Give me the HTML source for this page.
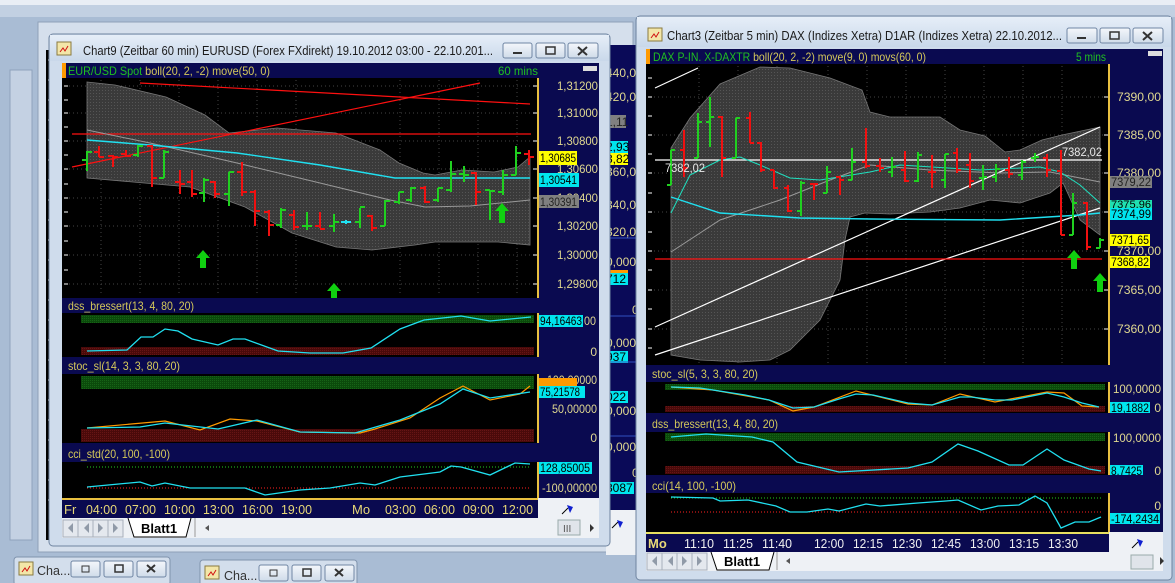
<!DOCTYPE html>
<html><head><meta charset="utf-8"><style>
html,body{margin:0;padding:0;background:#a9bcd4;overflow:hidden}
svg{display:block}
text{font-family:"Liberation Sans",sans-serif}
</style></head><body>
<svg width="1175" height="583" viewBox="0 0 1175 583" xmlns="http://www.w3.org/2000/svg">
<defs>
<linearGradient id="tb" x1="0" y1="0" x2="0" y2="1"><stop offset="0" stop-color="#e6eef8"/><stop offset="1" stop-color="#c9d8ea"/></linearGradient>
<linearGradient id="bt" x1="0" y1="0" x2="0" y2="1"><stop offset="0" stop-color="#f4f7fb"/><stop offset="1" stop-color="#cfdbe9"/></linearGradient>
<pattern id="dots" width="3" height="3" patternUnits="userSpaceOnUse"><rect width="3" height="3" fill="#3a3a3a"/><rect width="1" height="1" fill="#555"/></pattern>
<pattern id="gdots" width="2" height="2" patternUnits="userSpaceOnUse"><rect width="2" height="2" fill="#0b4a0b"/><rect width="1" height="1" fill="#166316"/></pattern>
<pattern id="rdots" width="2" height="2" patternUnits="userSpaceOnUse"><rect width="2" height="2" fill="#4a0a0a"/><rect width="1" height="1" fill="#661515"/></pattern>
</defs>
<rect x="0" y="0" width="1175" height="583" fill="#a9bcd4"/>
<rect x="0" y="0" width="1175" height="5" fill="#e9eef5"/>
<rect x="0" y="5" width="1175" height="12" fill="#c2d0e2"/>
<rect x="10" y="70" width="22" height="470" fill="#c4d1e3" stroke="#8fa2bc"/>
<rect x="38" y="22" width="595" height="530" fill="#d5dfec" stroke="#8ea0b8"/>
<rect x="46" y="50" width="8" height="490" fill="#000"/>
<path d="M48 60h4M48 80h4M48 100h4M48 120h4M48 140h4M48 160h4M48 180h4M48 200h4M48 220h4M48 240h4M48 260h4M48 280h4M48 300h4M48 320h4M48 340h4M48 360h4M48 380h4M48 400h4M48 420h4M48 440h4M48 460h4M48 480h4M48 500h4" stroke="#fff"/>
<rect x="606" y="45" width="32" height="465" fill="#0a0a58"/>
<g font-size="12" fill="#e0d890">
<text x="606" y="77">440,00</text><text x="606" y="101">420,00</text>
<rect x="606" y="115" width="20" height="13" fill="#808080"/><text x="606" y="126" fill="#222">1,11</text>
<rect x="606" y="141" width="22" height="12" fill="#00e5ee"/><text x="606" y="151" fill="#000">2,93</text>
<rect x="606" y="153" width="22" height="12" fill="#ffff00"/><text x="606" y="163" fill="#000">3,82</text>
<text x="606" y="176">360,00</text><text x="606" y="209">340,00</text><text x="606" y="236">320,00</text>
<text x="606" y="266">0,0000</text>
<rect x="606" y="270" width="22" height="4" fill="#ff9a00"/>
<rect x="606" y="273" width="22" height="12" fill="#00e5ee"/><text x="606" y="283" fill="#000">712</text>
<text x="632" y="314">0</text><text x="606" y="347">0,0000</text>
<rect x="606" y="351" width="22" height="12" fill="#00e5ee"/><text x="606" y="361" fill="#000">937</text>
<rect x="606" y="391" width="22" height="12" fill="#00e5ee"/><text x="606" y="401" fill="#000">022</text>
<text x="606" y="415">0,0000</text><text x="606" y="451">0,0000</text><text x="632" y="477">0</text>
<rect x="606" y="482" width="28" height="12" fill="#00e5ee"/><text x="606" y="492" fill="#000">3087</text>
</g>
<path d="M606 238H636M606 316H636M606 362H636M606 436H636" stroke="#3050c0"/>
<rect x="606" y="510" width="32" height="45" fill="#eef1f5"/>
<path d="M612 528l6-6" stroke="#000"/><path d="M617 520l6 2-3 6z" fill="#1020d0"/>

<!-- CHART9 -->
<rect x="49" y="34" width="561" height="512" rx="4" fill="#cfdcec" stroke="#6f84a0"/>
<rect x="50" y="35" width="559" height="26" fill="url(#tb)"/>
<rect x="57" y="42" width="14" height="13" fill="#f3e6a8" stroke="#8a7a40"/><path d="M60 52l3-4 2 3 3-5" stroke="#d01010" fill="none"/>
<text x="83" y="55" font-size="12.5" fill="#1a1a1a" textLength="410" lengthAdjust="spacingAndGlyphs">Chart9 (Zeitbar 60 min)  EURUSD (Forex FXdirekt) 19.10.2012 03:00 - 22.10.201...</text>
<g stroke="#7086a4" fill="url(#bt)"><rect x="503" y="43" width="29" height="15" rx="2"/><rect x="536" y="43" width="29" height="15" rx="2"/><rect x="568" y="43" width="30" height="15" rx="2"/></g>
<path d="M513 53h9" stroke="#333" stroke-width="2"/><rect x="546" y="47" width="9" height="7" fill="none" stroke="#333" stroke-width="1.5"/><path d="M578 47l9 8M587 47l-9 8" stroke="#333" stroke-width="2"/>
<rect x="62" y="63" width="537" height="15" fill="#0a0a50"/>
<rect x="62" y="63" width="4" height="15" fill="#ff9a00"/>
<rect x="583" y="66" width="14" height="5" fill="#ddd"/>
<text x="68" y="75" font-size="12" textLength="202" lengthAdjust="spacingAndGlyphs"><tspan fill="#20c020">EUR/USD Spot</tspan><tspan fill="#d4c85a"> boll(20, 2, -2) move(50, 0)</tspan></text>
<text x="498" y="75" font-size="12" fill="#20c020" textLength="40" lengthAdjust="spacingAndGlyphs">60 mins</text>
<rect x="62" y="78" width="476" height="220" fill="#000"/>
<rect x="538" y="78" width="61" height="220" fill="#0a0a50"/>
<path d="M538 78V298" stroke="#e8c040" stroke-width="2"/>
<g stroke="#444" stroke-dasharray="1,3">
<path d="M101 80V296M140 80V296M179 80V296M218 80V296M257 80V296M296 80V296M400 80V296M439 80V296M478 80V296M517 80V296"/>
<path d="M65 86H536M65 113H536M65 141H536M65 169H536M65 198H536M65 226H536M65 255H536M65 284H536"/>
</g>
<path d="M64 86h4M64 100h4M64 113h4M64 127h4M64 141h4M64 155h4M64 169h4M64 184h4M64 198h4M64 212h4M64 226h4M64 241h4M64 255h4M64 270h4M64 284h4M533 86h4M533 113h4M533 141h4M533 169h4M533 198h4M533 226h4M533 255h4M533 284h4" stroke="#fff"/>
<polygon points="87,82 115,85 166,97 205,115 229,133 277,128 336,133 380,150 399,163 423,173 435,175 462,170 494,172 518,167 530,157 530,245 498,242 435,242 415,245 372,250 336,247 292,233 245,207 190,187 87,178" fill="url(#dots)" stroke="#777" stroke-width="0.8"/>
<path d="M72 134H531" stroke="#ff1010" stroke-width="1.2"/>
<path d="M140 83L530 104M72 167L480 83" stroke="#ff1010" stroke-width="1.2"/>
<polyline points="87,130 150,143 237,163 320,183 390,200 425,207 470,206 530,200" fill="none" stroke="#999"/>
<polyline points="87,140 150,145 237,153 320,165 395,178 470,178 530,178" fill="none" stroke="#20e0f0" stroke-width="1.4"/>
<path stroke="#20d020" stroke-width="2" fill="none" d="M87 151V171M82 160H87M87 152H92M138 145V157M133 155H138M138 146H143M164 150V178M159 178H164M164 152H169M204 178V202M199 193H204M204 180H209M229 172V206M224 194H229M229 172H234M281 208V228M276 225H281M281 210H286M307 212V230M302 226H307M307 226H312M334 214V232M329 226H334M334 222H339M360 208V228M355 222H360M360 207H365M385 200V226M380 226H385M385 201H390M399 192V204M394 202H399M399 192H404M411 187V202M406 200H411M411 188H416M438 188V202M433 200H438M438 188H443M451 161V192M446 190H451M451 174H456M464 166V182M459 174H464M464 175H469M490 190V220M485 190H490M490 191H495M503 170V195M498 192H503M503 175H508M516 146V175M511 175H516M516 153H521"/>
<path stroke="#f01010" stroke-width="2" fill="none" d="M99 146V157M94 152H99M99 157H104M113 155V167M108 156H113M113 157H118M126 150V157M121 154H126M126 156H131M152 145V187M147 146H152M152 178H157M180 170V194M175 182H180M180 184H185M192 170V197M187 182H192M192 194H197M215 181V198M210 182H215M215 194H220M242 162V196M237 172H242M242 192H247M255 190V226M250 192H255M255 211H260M269 210V236M264 212H269M269 225H274M294 210V230M289 215H294M294 227H299M320 212V228M315 226H320M320 229H325M372 215V231M367 216H372M372 228H377M425 186V203M420 188H425M425 202H430M476 172V205M471 173H476M476 192H481M529 150V165M524 154H529M529 157H534"/>
<path d="M341 222H351M346 220V224" stroke="#20e0f0" stroke-width="2"/>
<g fill="#10d010"><path d="M203 250l-7 8h4v10h6v-10h4z"/><path d="M334 283l-7 8h4v8h6v-8h4z"/><path d="M502 203l-7 8h4v12h6v-12h4z"/></g>
<g font-size="12" fill="#e0d890" text-anchor="end">
<text x="598" y="90" textLength="41" lengthAdjust="spacingAndGlyphs">1,31200</text><text x="598" y="117" textLength="41" lengthAdjust="spacingAndGlyphs">1,31000</text><text x="598" y="145" textLength="41" lengthAdjust="spacingAndGlyphs">1,30800</text>
<text x="598" y="173" textLength="41" lengthAdjust="spacingAndGlyphs">1,30600</text><text x="598" y="202" textLength="41" lengthAdjust="spacingAndGlyphs">1,30400</text><text x="598" y="230" textLength="41" lengthAdjust="spacingAndGlyphs">1,30200</text>
<text x="598" y="259" textLength="41" lengthAdjust="spacingAndGlyphs">1,30000</text><text x="598" y="288" textLength="41" lengthAdjust="spacingAndGlyphs">1,29800</text>
</g>
<rect x="539" y="151" width="38" height="14" fill="#ffff00"/><text x="540" y="162" font-size="12" fill="#000" textLength="36" lengthAdjust="spacingAndGlyphs">1,30685</text>
<rect x="539" y="173" width="40" height="14" fill="#00e5ee"/><text x="540" y="184" font-size="12" fill="#000" textLength="37" lengthAdjust="spacingAndGlyphs">1,30541</text>
<rect x="539" y="195" width="40" height="13" fill="#808080"/><text x="540" y="206" font-size="12" fill="#222" textLength="37" lengthAdjust="spacingAndGlyphs">1,30391</text>
<!-- dss -->
<rect x="62" y="298" width="537" height="15" fill="#0a0a50"/>
<text x="68" y="310" font-size="12" fill="#d4c85a" textLength="126" lengthAdjust="spacingAndGlyphs">dss_bressert(13, 4, 80, 20)</text>
<rect x="62" y="313" width="476" height="44" fill="#000"/>
<rect x="538" y="313" width="61" height="44" fill="#0a0a50"/><path d="M538 313V357" stroke="#e8c040" stroke-width="2"/>
<rect x="81" y="315" width="453" height="8" fill="url(#gdots)"/><rect x="81" y="347" width="453" height="8" fill="url(#rdots)"/>
<polyline points="87,351 127,350 141,337 153,337 165,329 178,331 192,339 218,345 233,339 245,339 278,351 310,353 343,353 371,348 400,329 424,320 461,316 490,321 531,317" fill="none" stroke="#20e0f0" stroke-width="1.3"/>
<rect x="539" y="315" width="44" height="12" fill="#00e5ee"/><text x="540" y="325" font-size="12" fill="#000" textLength="42" lengthAdjust="spacingAndGlyphs">94,16463</text><text x="584" y="325" font-size="12" fill="#e0d890" textLength="12" lengthAdjust="spacingAndGlyphs">00</text>
<text x="597" y="356" font-size="12" fill="#e0d890" text-anchor="end">0</text>
<!-- stoc -->
<rect x="62" y="357" width="537" height="17" fill="#0a0a50"/>
<text x="68" y="370" font-size="12" fill="#d4c85a" textLength="112" lengthAdjust="spacingAndGlyphs">stoc_sl(14, 3, 3, 80, 20)</text>
<rect x="62" y="374" width="476" height="69" fill="#000"/>
<rect x="538" y="374" width="61" height="69" fill="#0a0a50"/><path d="M538 374V443" stroke="#e8c040" stroke-width="2"/>
<rect x="81" y="376" width="453" height="13" fill="url(#gdots)"/><rect x="81" y="429" width="453" height="13" fill="url(#rdots)"/>
<polyline points="87,428 165,421 200,430 230,419 257,421 300,432 360,433 375,429 410,418 440,398 463,386 490,400 520,394 530,386" fill="none" stroke="#ff9a00" stroke-width="1.2"/>
<polyline points="87,428 140,427 165,423 218,429 257,420 300,432 355,433 400,420 440,404 463,389 490,398 530,392" fill="none" stroke="#20e0f0" stroke-width="1.3"/>
<text x="597" y="384" font-size="12" fill="#e0d890" text-anchor="end" textLength="50" lengthAdjust="spacingAndGlyphs">100,00000</text>
<rect x="539" y="378" width="38" height="8" fill="#ff9a00"/>
<rect x="539" y="386" width="46" height="12" fill="#00e5ee"/><text x="540" y="396" font-size="12" fill="#000" textLength="40" lengthAdjust="spacingAndGlyphs">75,21578</text>
<text x="597" y="413" font-size="12" fill="#e0d890" text-anchor="end" textLength="45" lengthAdjust="spacingAndGlyphs">50,00000</text>
<text x="597" y="442" font-size="12" fill="#e0d890" text-anchor="end">0</text>
<!-- cci -->
<rect x="62" y="443" width="537" height="19" fill="#0a0a50"/>
<text x="68" y="458" font-size="12" fill="#d4c85a" textLength="102" lengthAdjust="spacingAndGlyphs">cci_std(20, 100, -100)</text>
<rect x="62" y="462" width="476" height="36" fill="#000"/>
<rect x="538" y="462" width="61" height="36" fill="#0a0a50"/><path d="M538 462V498" stroke="#e8c040" stroke-width="2"/>
<path d="M87 467H531" stroke="#20d020" stroke-dasharray="1,2"/><path d="M87 488H531" stroke="#ff2020" stroke-dasharray="1,2"/>
<polyline points="87,487 140,482 152,486 165,483 190,488 245,488 265,495 300,490 330,488 360,483 375,485 400,477 440,472 451,466 461,467 490,475 515,463 530,464" fill="none" stroke="#20e0f0" stroke-width="1.3"/>
<rect x="539" y="462" width="53" height="12" fill="#00e5ee"/><text x="540" y="472" font-size="12" fill="#000" textLength="50" lengthAdjust="spacingAndGlyphs">128,85005</text>
<text x="597" y="492" font-size="12" fill="#e0d890" text-anchor="end" textLength="55" lengthAdjust="spacingAndGlyphs">-100,00000</text>
<!-- time axis -->
<rect x="62" y="498" width="476" height="20" fill="#0a0a50"/><path d="M62 499H538" stroke="#e8c040" stroke-width="2"/>
<rect x="538" y="498" width="61" height="20" fill="#eef1f5"/>
<path d="M562 514l6-6" stroke="#000"/><path d="M567 505l6 2-3 6z" fill="#1020d0"/>
<g font-size="13" fill="#e8d878"><text x="64" y="514">Fr</text><text x="86" y="514" textLength="31" lengthAdjust="spacingAndGlyphs">04:00</text><text x="125" y="514" textLength="31" lengthAdjust="spacingAndGlyphs">07:00</text><text x="164" y="514" textLength="31" lengthAdjust="spacingAndGlyphs">10:00</text><text x="203" y="514" textLength="31" lengthAdjust="spacingAndGlyphs">13:00</text><text x="242" y="514" textLength="31" lengthAdjust="spacingAndGlyphs">16:00</text><text x="281" y="514" textLength="31" lengthAdjust="spacingAndGlyphs">19:00</text><text x="352" y="514">Mo</text><text x="385" y="514" textLength="31" lengthAdjust="spacingAndGlyphs">03:00</text><text x="424" y="514" textLength="31" lengthAdjust="spacingAndGlyphs">06:00</text><text x="463" y="514" textLength="31" lengthAdjust="spacingAndGlyphs">09:00</text><text x="502" y="514" textLength="31" lengthAdjust="spacingAndGlyphs">12:00</text></g>
<rect x="62" y="518" width="537" height="20" fill="#eef1f5"/>
<g fill="#e4e8ee" stroke="#a8b0bc"><rect x="63" y="520" width="15" height="17"/><rect x="78" y="520" width="15" height="17"/><rect x="93" y="520" width="15" height="17"/><rect x="108" y="520" width="15" height="17"/></g>
<g fill="#909aa8"><path d="M68 528l5-5v10z"/><path d="M84 528l5-5v10z"/><path d="M103 528l-5-5v10z"/><path d="M118 528l-5-5v10z"/></g>
<path d="M128 518L134 537H186L191 518" fill="#fff" stroke="#000"/>
<text x="141" y="533" font-size="13" font-weight="bold" fill="#000">Blatt1</text>
<path d="M195 518V537" stroke="#999"/>
<path d="M205 528l4-3v6z" fill="#555"/>
<rect x="558" y="520" width="22" height="15" fill="#e0e4ea" stroke="#9aa"/><text x="563" y="532" font-size="10" fill="#555">III</text>
<path d="M590 524v8l4-4z" fill="#333"/>

<!-- CHART3 -->
<rect x="636" y="16" width="536" height="564" rx="4" fill="#cfdcec" stroke="#6f84a0"/>
<rect x="637" y="17" width="534" height="30" fill="url(#tb)"/>
<rect x="648" y="28" width="14" height="13" fill="#f3e6a8" stroke="#8a7a40"/><path d="M651 38l3-4 2 3 3-5" stroke="#d01010" fill="none"/>
<text x="667" y="40" font-size="12.5" fill="#1a1a1a" textLength="395" lengthAdjust="spacingAndGlyphs">Chart3 (Zeitbar 5 min)  DAX (Indizes Xetra) D1AR (Indizes Xetra) 22.10.2012...</text>
<g stroke="#7086a4" fill="url(#bt)"><rect x="1067" y="28" width="30" height="15" rx="2"/><rect x="1100" y="28" width="30" height="15" rx="2"/><rect x="1133" y="28" width="30" height="15" rx="2"/></g>
<path d="M1077 38h9" stroke="#333" stroke-width="2"/><rect x="1110" y="32" width="9" height="7" fill="none" stroke="#333" stroke-width="1.5"/><path d="M1143 32l9 8M1152 32l-9 8" stroke="#333" stroke-width="2"/>
<rect x="646" y="49" width="517" height="15" fill="#0a0a50"/>
<rect x="646" y="49" width="4" height="15" fill="#ff9a00"/>
<rect x="1148" y="51" width="14" height="5" fill="#ddd"/>
<text x="653" y="61" font-size="12" textLength="273" lengthAdjust="spacingAndGlyphs"><tspan fill="#20c020">DAX P-IN. X-DAXTR</tspan><tspan fill="#d4c85a"> boll(20, 2, -2) move(9, 0) movs(60, 0)</tspan></text>
<text x="1076" y="61" font-size="12" fill="#20c020" textLength="30" lengthAdjust="spacingAndGlyphs">5 mins</text>
<rect x="646" y="64" width="463" height="301" fill="#000"/>
<rect x="1109" y="64" width="54" height="301" fill="#0a0a50"/><path d="M1109 64V365" stroke="#e8c040" stroke-width="2"/>
<g stroke="#444" stroke-dasharray="1,3">
<path d="M699 66V363M738 66V363M777 66V363M828 66V363M867 66V363M906 66V363M945 66V363M984 66V363M1023 66V363M1062 66V363"/>
<path d="M650 97H1107M650 135H1107M650 173H1107M650 212H1107M650 251H1107M650 290H1107M650 329H1107"/>
</g>
<path d="M648 78h4M648 97h4M648 116h4M648 135h4M648 154h4M648 173h4M648 193h4M648 212h4M648 232h4M648 251h4M648 270h4M648 290h4M648 309h4M648 329h4M648 348h4M1104 97h4M1104 135h4M1104 173h4M1104 212h4M1104 251h4M1104 290h4M1104 329h4" stroke="#fff"/>
<polygon points="671,148 690,118 720,84 760,67 790,68 830,78 862,90 870,112 890,117 940,117 960,130 985,136 1005,152 1020,150 1042,140 1062,135 1100,127 1100,235 1080,220 1063,183 1050,193 1020,203 990,200 960,208 930,212 890,214 865,213 850,217 845,240 840,280 820,320 790,350 770,360 740,362 700,360 671,355" fill="url(#dots)" stroke="#777" stroke-width="0.8"/>
<path d="M655 88L698 68M655 327L1100 127M655 355L1100 208M655 160H1102" stroke="#fff" stroke-width="1.2"/>
<path d="M655 259H1102" stroke="#ff1010" stroke-width="1.2"/>
<polyline points="671,252 720,220 780,200 830,180 870,165 930,170 1000,173 1050,172 1100,182" fill="none" stroke="#999"/>
<polyline points="671,213 690,175 720,160 740,157 760,165 790,178 820,180 870,172 900,165 980,170 1040,167 1060,172 1080,185 1100,203" fill="none" stroke="#20e0c0" stroke-width="1"/>
<polyline points="671,197 720,213 800,218 870,219 1000,220 1080,215 1100,213" fill="none" stroke="#20e0f0" stroke-width="1.4"/>
<path stroke="#20d020" stroke-width="2" fill="none" d="M671 150V185M667 185H671M671 150H675M698 113V158M694 158H698M698 122H702M710 97V147M706 122H710M710 117H714M736 118V158M732 158H736M736 118H740M801 181V216M797 211H801M801 183H805M827 166V193M823 193H827M827 172H831M852 148V180M848 180H852M852 162H856M892 157V177M888 172H892M892 167H896M918 152V182M914 181H918M918 155H922M945 154V188M941 180H945M945 154H949M983 165V190M979 178H983M983 177H987M996 164V182M992 177H996M996 169H1000M1022 160V180M1018 175H1022M1022 162H1026M1035 153V162M1031 158H1035M1035 157H1039M1073 193V235M1069 235H1073M1073 203H1077M1100 238V248M1096 248H1100M1100 240H1104"/>
<path stroke="#f01010" stroke-width="2" fill="none" d="M684 130V177M680 150H684M684 168H688M722 116V177M718 117H722M722 158H726M750 112V143M746 118H750M750 143H754M761 142V172M757 143H761M761 170H765M774 170V189M770 170H774M774 188H778M788 185V212M784 188H788M788 211H792M814 183V200M810 184H814M814 184H818M840 176V195M836 177H840M840 180H844M866 128V168M862 162H866M866 166H870M880 158V172M876 166H880M880 168H884M905 151V182M901 170H905M905 181H909M932 155V188M928 172H932M932 172H936M957 148V173M953 153H957M957 170H961M970 153V188M966 165H970M970 181H974M1009 157V178M1005 170H1009M1009 174H1013M1047 154V177M1043 158H1047M1047 170H1051M1061 150V235M1057 171H1061M1061 235H1065M1087 202V250M1083 203H1087M1087 247H1091"/>
<g fill="#10d010"><path d="M1074 250l-7 8h4v11h6v-11h4z"/><path d="M1100 273l-7 8h4v11h6v-11h4z"/></g>
<text x="665" y="172" font-size="12" fill="#e8e8e8" textLength="40" lengthAdjust="spacingAndGlyphs">7382,02</text>
<text x="1062" y="156" font-size="12" fill="#e8e8e8" textLength="40" lengthAdjust="spacingAndGlyphs">7382,02</text>
<g font-size="12" fill="#e0d890" text-anchor="end">
<text x="1161" y="101" textLength="44" lengthAdjust="spacingAndGlyphs">7390,00</text><text x="1161" y="139" textLength="44" lengthAdjust="spacingAndGlyphs">7385,00</text><text x="1161" y="177" textLength="44" lengthAdjust="spacingAndGlyphs">7380,00</text>
<text x="1161" y="255" textLength="44" lengthAdjust="spacingAndGlyphs">7370,00</text><text x="1161" y="294" textLength="44" lengthAdjust="spacingAndGlyphs">7365,00</text><text x="1161" y="333" textLength="44" lengthAdjust="spacingAndGlyphs">7360,00</text>
</g>
<rect x="1110" y="176" width="42" height="12" fill="#808080"/><text x="1111" y="186" font-size="12" fill="#222" textLength="40" lengthAdjust="spacingAndGlyphs">7379,22</text>
<rect x="1110" y="200" width="42" height="9" fill="#20e0b0"/><text x="1111" y="208" font-size="11" fill="#000" textLength="40" lengthAdjust="spacingAndGlyphs">7375,96</text>
<rect x="1110" y="208" width="42" height="12" fill="#00e5ee"/><text x="1111" y="218" font-size="12" fill="#000" textLength="40" lengthAdjust="spacingAndGlyphs">7374,99</text>
<rect x="1110" y="234" width="40" height="12" fill="#ffff00"/><text x="1111" y="244" font-size="12" fill="#000" textLength="38" lengthAdjust="spacingAndGlyphs">7371,65</text>
<rect x="1110" y="256" width="40" height="12" fill="#ffff00"/><text x="1111" y="266" font-size="12" fill="#000" textLength="38" lengthAdjust="spacingAndGlyphs">7368,82</text>
<!-- stoc -->
<rect x="646" y="365" width="517" height="17" fill="#0a0a50"/>
<text x="652" y="378" font-size="12" fill="#d4c85a" textLength="106" lengthAdjust="spacingAndGlyphs">stoc_sl(5, 3, 3, 80, 20)</text>
<rect x="646" y="382" width="463" height="31" fill="#000"/>
<rect x="1109" y="382" width="54" height="31" fill="#0a0a50"/><path d="M1109 382V413" stroke="#e8c040" stroke-width="2"/>
<rect x="665" y="384" width="440" height="6" fill="url(#gdots)"/><rect x="665" y="406" width="440" height="6" fill="url(#rdots)"/>
<polyline points="671,387 713,390 769,400 793,411 814,407 856,391 908,404 932,405 960,394 995,402 1047,392 1064,393 1082,406 1099,407" fill="none" stroke="#ff9a00" stroke-width="1.2"/>
<polyline points="671,387 700,388 713,390 745,395 769,400 793,408 814,407 839,399 856,394 873,395 908,403 932,405 960,397 971,397 995,400 1012,400 1047,393 1064,397 1082,403 1099,407" fill="none" stroke="#20e0f0" stroke-width="1.3"/>
<text x="1161" y="393" font-size="12" fill="#e0d890" text-anchor="end" textLength="48" lengthAdjust="spacingAndGlyphs">100,0000</text>
<rect x="1110" y="402" width="40" height="11" fill="#00e5ee"/><text x="1111" y="412" font-size="12" fill="#000" textLength="38" lengthAdjust="spacingAndGlyphs">19,1882</text>
<text x="1161" y="412" font-size="12" fill="#e0d890" text-anchor="end">0</text>
<!-- dss -->
<rect x="646" y="413" width="517" height="19" fill="#0a0a50"/>
<text x="652" y="428" font-size="12" fill="#d4c85a" textLength="126" lengthAdjust="spacingAndGlyphs">dss_bressert(13, 4, 80, 20)</text>
<rect x="646" y="432" width="463" height="43" fill="#000"/>
<rect x="1109" y="432" width="54" height="43" fill="#0a0a50"/><path d="M1109 432V475" stroke="#e8c040" stroke-width="2"/>
<rect x="665" y="433" width="440" height="8" fill="url(#gdots)"/><rect x="665" y="466" width="440" height="8" fill="url(#rdots)"/>
<polyline points="671,437 706,434 752,437 773,442 797,462 839,472 908,468 932,462 958,444 978,451 1009,465 1023,465 1047,449 1064,460 1089,469 1101,471" fill="none" stroke="#20e0f0" stroke-width="1.3"/>
<text x="1161" y="442" font-size="12" fill="#e0d890" text-anchor="end" textLength="48" lengthAdjust="spacingAndGlyphs">100,0000</text>
<rect x="1110" y="465" width="33" height="11" fill="#00e5ee"/><text x="1111" y="475" font-size="12" fill="#000" textLength="31" lengthAdjust="spacingAndGlyphs">8,7425</text>
<text x="1161" y="475" font-size="12" fill="#e0d890" text-anchor="end">0</text>
<!-- cci -->
<rect x="646" y="475" width="517" height="18" fill="#0a0a50"/>
<text x="652" y="490" font-size="12" fill="#d4c85a" textLength="84" lengthAdjust="spacingAndGlyphs">cci(14, 100, -100)</text>
<rect x="646" y="493" width="463" height="39" fill="#000"/>
<rect x="1109" y="493" width="54" height="39" fill="#0a0a50"/><path d="M1109 493V532" stroke="#e8c040" stroke-width="2"/>
<path d="M671 498H1101" stroke="#20d020" stroke-dasharray="1,2"/><path d="M671 512H1101" stroke="#ff2020" stroke-dasharray="1,2"/>
<polyline points="671,497 713,498 720,501 748,500 776,506 790,512 807,512 828,509 839,511 866,504 880,506 918,503 946,501 958,500 981,510 998,506 1019,505 1035,496 1047,503 1061,528 1075,522 1089,522 1101,517" fill="none" stroke="#20e0f0" stroke-width="1.3"/>
<text x="1161" y="510" font-size="12" fill="#e0d890" text-anchor="end">0</text>
<rect x="1110" y="513" width="50" height="11" fill="#00e5ee"/><text x="1111" y="523" font-size="12" fill="#000" textLength="48" lengthAdjust="spacingAndGlyphs">-174,2434</text>
<rect x="646" y="532" width="463" height="20" fill="#0a0a50"/><path d="M646 533H1109" stroke="#e8e060" stroke-width="2"/>
<rect x="1109" y="532" width="54" height="20" fill="#eef1f5"/>
<path d="M1132 548l6-6" stroke="#000"/><path d="M1137 539l6 2-3 6z" fill="#1020d0"/>
<text x="648" y="548" font-size="13" font-weight="bold" fill="#e8d878">Mo</text>
<g font-size="13" fill="#f0f0f0"><text x="684" y="548" textLength="30" lengthAdjust="spacingAndGlyphs">11:10</text><text x="723" y="548" textLength="30" lengthAdjust="spacingAndGlyphs">11:25</text><text x="762" y="548" textLength="30" lengthAdjust="spacingAndGlyphs">11:40</text><text x="814" y="548" textLength="30" lengthAdjust="spacingAndGlyphs">12:00</text><text x="853" y="548" textLength="30" lengthAdjust="spacingAndGlyphs">12:15</text><text x="892" y="548" textLength="30" lengthAdjust="spacingAndGlyphs">12:30</text><text x="931" y="548" textLength="30" lengthAdjust="spacingAndGlyphs">12:45</text><text x="970" y="548" textLength="30" lengthAdjust="spacingAndGlyphs">13:00</text><text x="1009" y="548" textLength="30" lengthAdjust="spacingAndGlyphs">13:15</text><text x="1048" y="548" textLength="30" lengthAdjust="spacingAndGlyphs">13:30</text></g>
<rect x="646" y="552" width="517" height="19" fill="#eef1f5"/>
<g fill="#e4e8ee" stroke="#a8b0bc"><rect x="647" y="553" width="15" height="17"/><rect x="662" y="553" width="15" height="17"/><rect x="677" y="553" width="15" height="17"/><rect x="692" y="553" width="15" height="17"/></g>
<g fill="#909aa8"><path d="M652 561l5-5v10z"/><path d="M668 561l5-5v10z"/><path d="M687 561l-5-5v10z"/><path d="M702 561l-5-5v10z"/></g>
<path d="M711 552L717 570H769L774 552" fill="#fff" stroke="#000"/>
<text x="724" y="566" font-size="13" font-weight="bold" fill="#000">Blatt1</text>
<path d="M777 552V570" stroke="#999"/>
<path d="M786 561l4-3v6z" fill="#555"/>
<rect x="1131" y="555" width="22" height="14" fill="#e0e4ea" stroke="#9aa"/>
<path d="M1160 557v8l4-4z" fill="#333"/>

<g>
<rect x="14" y="557" width="156" height="28" rx="3" fill="#d3deec" stroke="#7f93ad"/>
<rect x="19" y="562" width="14" height="13" fill="#f3e6a8" stroke="#8a7a40"/><path d="M22 572l3-4 2 3 3-5" stroke="#d01010" fill="none"/>
<text x="37" y="575" font-size="12.5" fill="#333">Cha...</text>
<g stroke="#7086a4" fill="url(#bt)"><rect x="71" y="561" width="29" height="16" rx="2"/><rect x="104" y="561" width="29" height="16" rx="2"/><rect x="137" y="561" width="29" height="16" rx="2"/></g>
<rect x="82" y="566" width="7" height="6" fill="none" stroke="#333"/><rect x="115" y="565" width="8" height="7" fill="none" stroke="#333" stroke-width="1.5"/><path d="M147 565l8 7M155 565l-8 7" stroke="#333" stroke-width="2"/>
</g>
<g>
<rect x="200" y="560" width="157" height="28" rx="3" fill="#d3deec" stroke="#7f93ad"/>
<rect x="205" y="566" width="14" height="13" fill="#f3e6a8" stroke="#8a7a40"/><path d="M208 576l3-4 2 3 3-5" stroke="#d01010" fill="none"/>
<text x="224" y="580" font-size="12.5" fill="#333">Cha...</text>
<g stroke="#7086a4" fill="url(#bt)"><rect x="259" y="565" width="29" height="16" rx="2"/><rect x="292" y="565" width="29" height="16" rx="2"/><rect x="325" y="565" width="29" height="16" rx="2"/></g>
<rect x="270" y="570" width="7" height="6" fill="none" stroke="#333"/><rect x="303" y="569" width="8" height="7" fill="none" stroke="#333" stroke-width="1.5"/><path d="M335 569l8 7M343 569l-8 7" stroke="#333" stroke-width="2"/>
</g>
</svg>
</body></html>
